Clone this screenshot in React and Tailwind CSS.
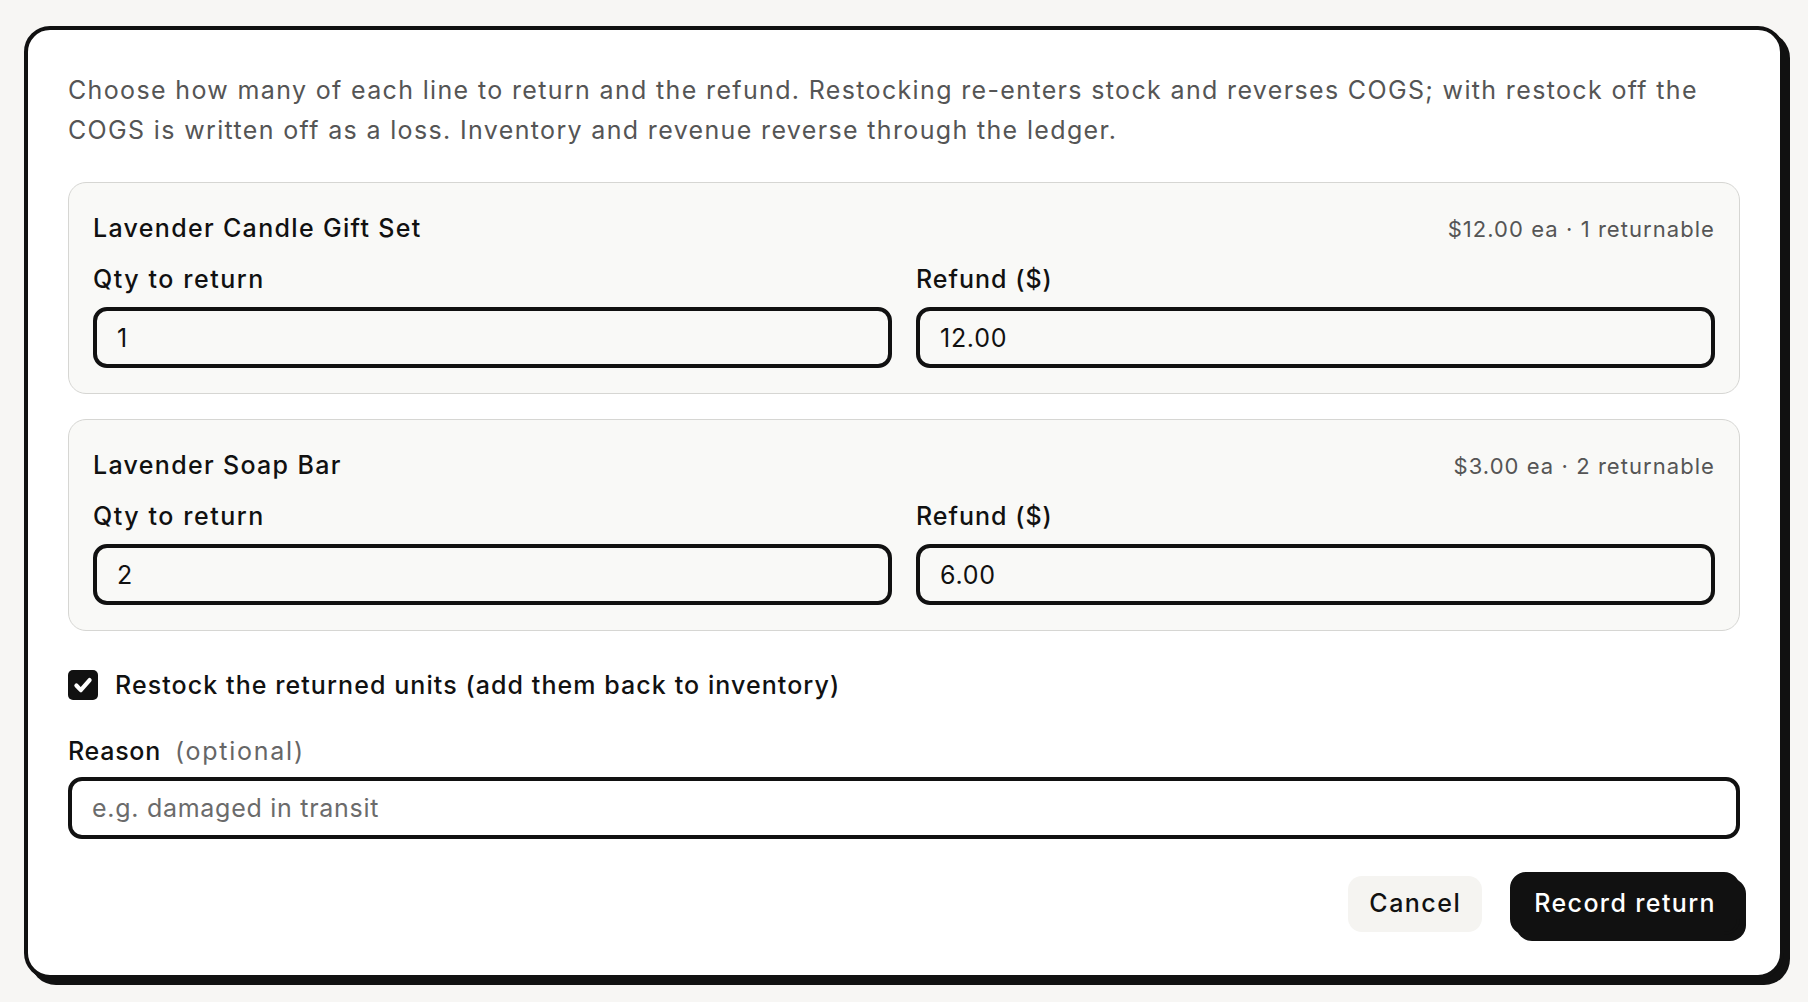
import React, { useState } from 'react';

const lines = [
  { id: 1, name: 'Lavender Candle Gift Set', price: '$12.00', returnable: 1, qty: '1', refund: '12.00' },
  { id: 2, name: 'Lavender Soap Bar', price: '$3.00', returnable: 2, qty: '2', refund: '6.00' },
];

const LineCard = ({ line }) => {
  const [qty, setQty] = useState(line.qty);
  const [refund, setRefund] = useState(line.refund);

  return (
    <div className="rounded-[18px] border border-[#d6d6d3] bg-[#f9f9f7] px-6 pb-[25px] pt-[29px]">
      <div className="flex items-baseline justify-between">
        <span className="text-[25px] font-medium leading-8 tracking-[0.053em] text-[#111]">{line.name}</span>
        <span className="text-[22px] leading-8 tracking-[0.048em] text-[#555]">
          {line.price} ea · {line.returnable} returnable
        </span>
      </div>
      <div className="mt-[18px] grid grid-cols-2 gap-x-6">
        <label className="block">
          <span className="block text-[25px] font-medium leading-8 tracking-[0.062em] text-[#111]">Qty to return</span>
          <input
            value={qty}
            onChange={(e) => setQty(e.target.value)}
            className="mt-3 h-[61px] w-full rounded-[14px] border-4 border-[#111] bg-transparent px-5 text-[25px] text-[#111] outline-none"
          />
        </label>
        <label className="block">
          <span className="block text-[25px] font-medium leading-8 tracking-[0.04em] text-[#111]">Refund ($)</span>
          <input
            value={refund}
            onChange={(e) => setRefund(e.target.value)}
            className="mt-3 h-[61px] w-full rounded-[14px] border-4 border-[#111] bg-transparent px-5 text-[25px] text-[#111] outline-none"
          />
        </label>
      </div>
    </div>
  );
};

export default function App() {
  const [restock, setRestock] = useState(true);

  return (
    <div
      className="min-h-screen bg-[#f7f6f4] px-6 pt-[26px] tracking-[0.045em]"
      style={{ fontFamily: 'Inter, "Noto Sans", sans-serif' }}
    >
      <div className="rounded-[26px] border-4 border-[#111] bg-white p-10 shadow-[6px_6px_0_#111]">
        {/* Intro */}
        <p className="text-[25px] leading-10 tracking-[0.054em] text-[#555]">
          Choose how many of each line to return and the refund. Restocking re-enters stock and reverses COGS; with
          restock off the COGS is written off as a loss. Inventory and revenue reverse through the ledger.
        </p>

        {/* Lines */}
        <div className="mt-8 flex flex-col gap-[25px]">
          {lines.map((line) => (
            <LineCard key={line.id} line={line} />
          ))}
        </div>

        {/* Restock */}
        <label className="mt-[38px] flex cursor-pointer items-center gap-[17px]">
          <button
            type="button"
            onClick={() => setRestock(!restock)}
            className={`flex h-[30px] w-[30px] items-center justify-center rounded-[5px] ${
              restock ? 'bg-[#111]' : 'border-2 border-[#111] bg-white'
            }`}
          >
            {restock && (
              <svg width="22" height="22" viewBox="0 0 20 20" fill="none">
                <path d="M4 10.5l4 4.2L16 5.5" stroke="white" strokeWidth="3.8" strokeLinecap="round" strokeLinejoin="round" />
              </svg>
            )}
          </button>
          <span className="text-[25px] font-medium leading-8 tracking-[0.043em] text-[#111]">
            Restock the returned units (add them back to inventory)
          </span>
        </label>

        {/* Reason */}
        <div className="mt-[34px]">
          <div className="flex items-baseline gap-[14px] leading-8">
            <span className="text-[25px] font-medium text-[#111]">Reason</span>
            <span className="text-[25px] tracking-[0.07em] text-[#666]">(optional)</span>
          </div>
          <input
            placeholder="e.g. damaged in transit"
            className="mt-[10px] h-[62px] w-full rounded-[14px] border-4 border-[#111] bg-white px-5 text-[25px] text-[#111] outline-none placeholder:text-[#6b6b6b]"
          />
        </div>

        {/* Actions */}
        <div className="mt-[33px] flex items-center justify-end gap-[28px]">
          <button className="h-[56px] rounded-[14px] bg-[#f5f4f1] px-[21px] text-[25px] font-medium tracking-[0.06em] text-[#111]">
            Cancel
          </button>
          <button className="h-[63px] rounded-[16px] border-[3px] border-[#111] bg-[#111] px-[21px] text-[25px] font-medium tracking-[0.055em] text-white shadow-[6px_6px_0_#111]">
            Record return
          </button>
        </div>
      </div>
    </div>
  );
}
